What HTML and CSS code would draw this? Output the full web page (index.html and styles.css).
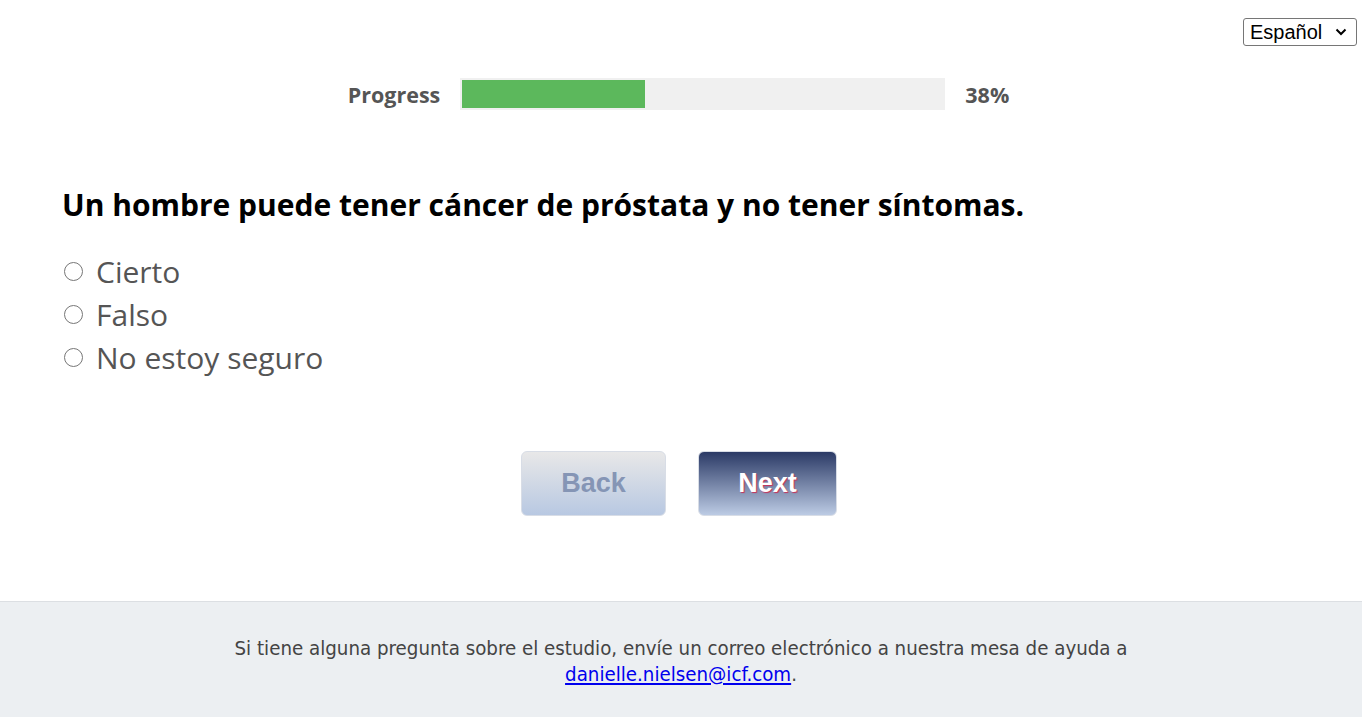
FILE: index.html
```html
<!DOCTYPE html>
<html lang="es">
<head>
  <meta charset="UTF-8" />
  <meta name="viewport" content="width=device-width, initial-scale=1" />
  <title>Encuesta</title>
  <link rel="stylesheet" href="styles.css">
</head>
<body>
  <div class="page">
    <div class="lang-bar">
      <div class="lang-wrap">
        <select class="lang-select" aria-label="Idioma">
          <option>Español</option>
          <option>English</option>
        </select>
        <svg class="lang-chevron" width="12" height="8" viewBox="0 0 12 8" aria-hidden="true">
          <path d="M1.5 1.5 L6 6 L10.5 1.5" fill="none" stroke="#000" stroke-width="2" />
        </svg>
      </div>
    </div>

    <div class="progress">
      <span class="progress-label">Progress</span>
      <div class="progress-track">
        <div class="progress-fill" style="width: 38%;"></div>
      </div>
      <span class="progress-value">38%</span>
    </div>

    <form class="question">
      <h2>Un hombre puede tener cáncer de próstata y no tener síntomas.</h2>
      <label class="option"><input type="radio" name="q1" /> Cierto</label>
      <label class="option"><input type="radio" name="q1" /> Falso</label>
      <label class="option"><input type="radio" name="q1" /> No estoy seguro</label>

      <div class="nav-buttons">
        <button type="button" class="btn btn-back">Back</button>
        <button type="button" class="btn btn-next">Next</button>
      </div>
    </form>
  </div>

  <footer class="footer">
    <p>Si tiene alguna pregunta sobre el estudio, envíe un correo electrónico a nuestra mesa de ayuda a<br>
    <a href="mailto:danielle.nielsen@icf.com">danielle.nielsen@icf.com</a>.</p>
  </footer>
</body>
</html>
```

FILE: styles.css
```css
* {
  box-sizing: border-box;
}
html, body {
  height: 100%;
}
body {
  margin: 0;
  display: flex;
  flex-direction: column;
  font-family: 'Open Sans', 'Liberation Sans', sans-serif;
  background: #fff;
}
.page {
  flex: 1;
  padding: 0 5px 0 62px;
}
.lang-bar {
  display: flex;
  justify-content: flex-end;
  padding-top: 18px;
}
.lang-wrap {
  position: relative;
}
.lang-select {
  appearance: none;
  -webkit-appearance: none;
  display: block;
  font-family: 'Liberation Sans', Arial, sans-serif;
  font-size: 20px;
  height: 28px;
  width: 114px;
  padding: 0 0 0 6px;
  border: 1px solid #767676;
  border-radius: 3px;
  background: #fff;
  color: #000;
}
.lang-chevron {
  position: absolute;
  right: 10px;
  top: 10px;
  pointer-events: none;
}
.progress {
  display: flex;
  align-items: center;
  justify-content: center;
  gap: 20px;
  margin: 32px 0 0 -62px;
  padding-left: 0;
}
.progress-label, .progress-value {
  font-weight: 700;
  font-size: 21.5px;
  color: #555;
}
.progress-track {
  width: 485px;
  height: 32px;
  padding: 2px;
  background: #f0f0f0;
}
.progress-fill {
  height: 100%;
  background: #5cb85c;
}
.question {
  margin-top: 74px;
}
.question h2 {
  margin: 0 0 25px;
  font-size: 30px;
  font-weight: 700;
  color: #000;
}
.option {
  display: flex;
  align-items: center;
  gap: 13px;
  height: 43px;
  font-size: 30px;
  color: #555;
}
.option input {
  margin: 0 0 0 2px;
  width: 19px;
  height: 19px;
}
.nav-buttons {
  display: flex;
  justify-content: center;
  gap: 32px;
  margin: 72px 0 0 -62px;
  padding-left: 1px;
}
.btn {
  height: 65px;
  border: 1px solid #d8dde6;
  border-radius: 6px;
  font-family: 'Liberation Sans', Arial, sans-serif;
  font-weight: 700;
  font-size: 27px;
  cursor: pointer;
}
.btn-back {
  width: 145px;
  color: #8595b5;
  background: linear-gradient(#e8e8e8, #b8c8e2);
}
.btn-next {
  width: 139px;
  color: #fff;
  background: linear-gradient(#2b3a66, #bccbe4);
  text-shadow: 1px 1px 1px #c5325a;
}
.footer {
  background: #eceff2;
  border-top: 1px solid #dcdfe3;
  padding: 33px 0 30px;
  text-align: center;
}
.footer p {
  margin: 0;
  font-family: 'DejaVu Sans Condensed', 'Liberation Sans Narrow', sans-serif;
  font-stretch: condensed;
  font-size: 20.3px;
  line-height: 26px;
  color: #444;
}
.footer a {
  color: #0000ee;
}
```
